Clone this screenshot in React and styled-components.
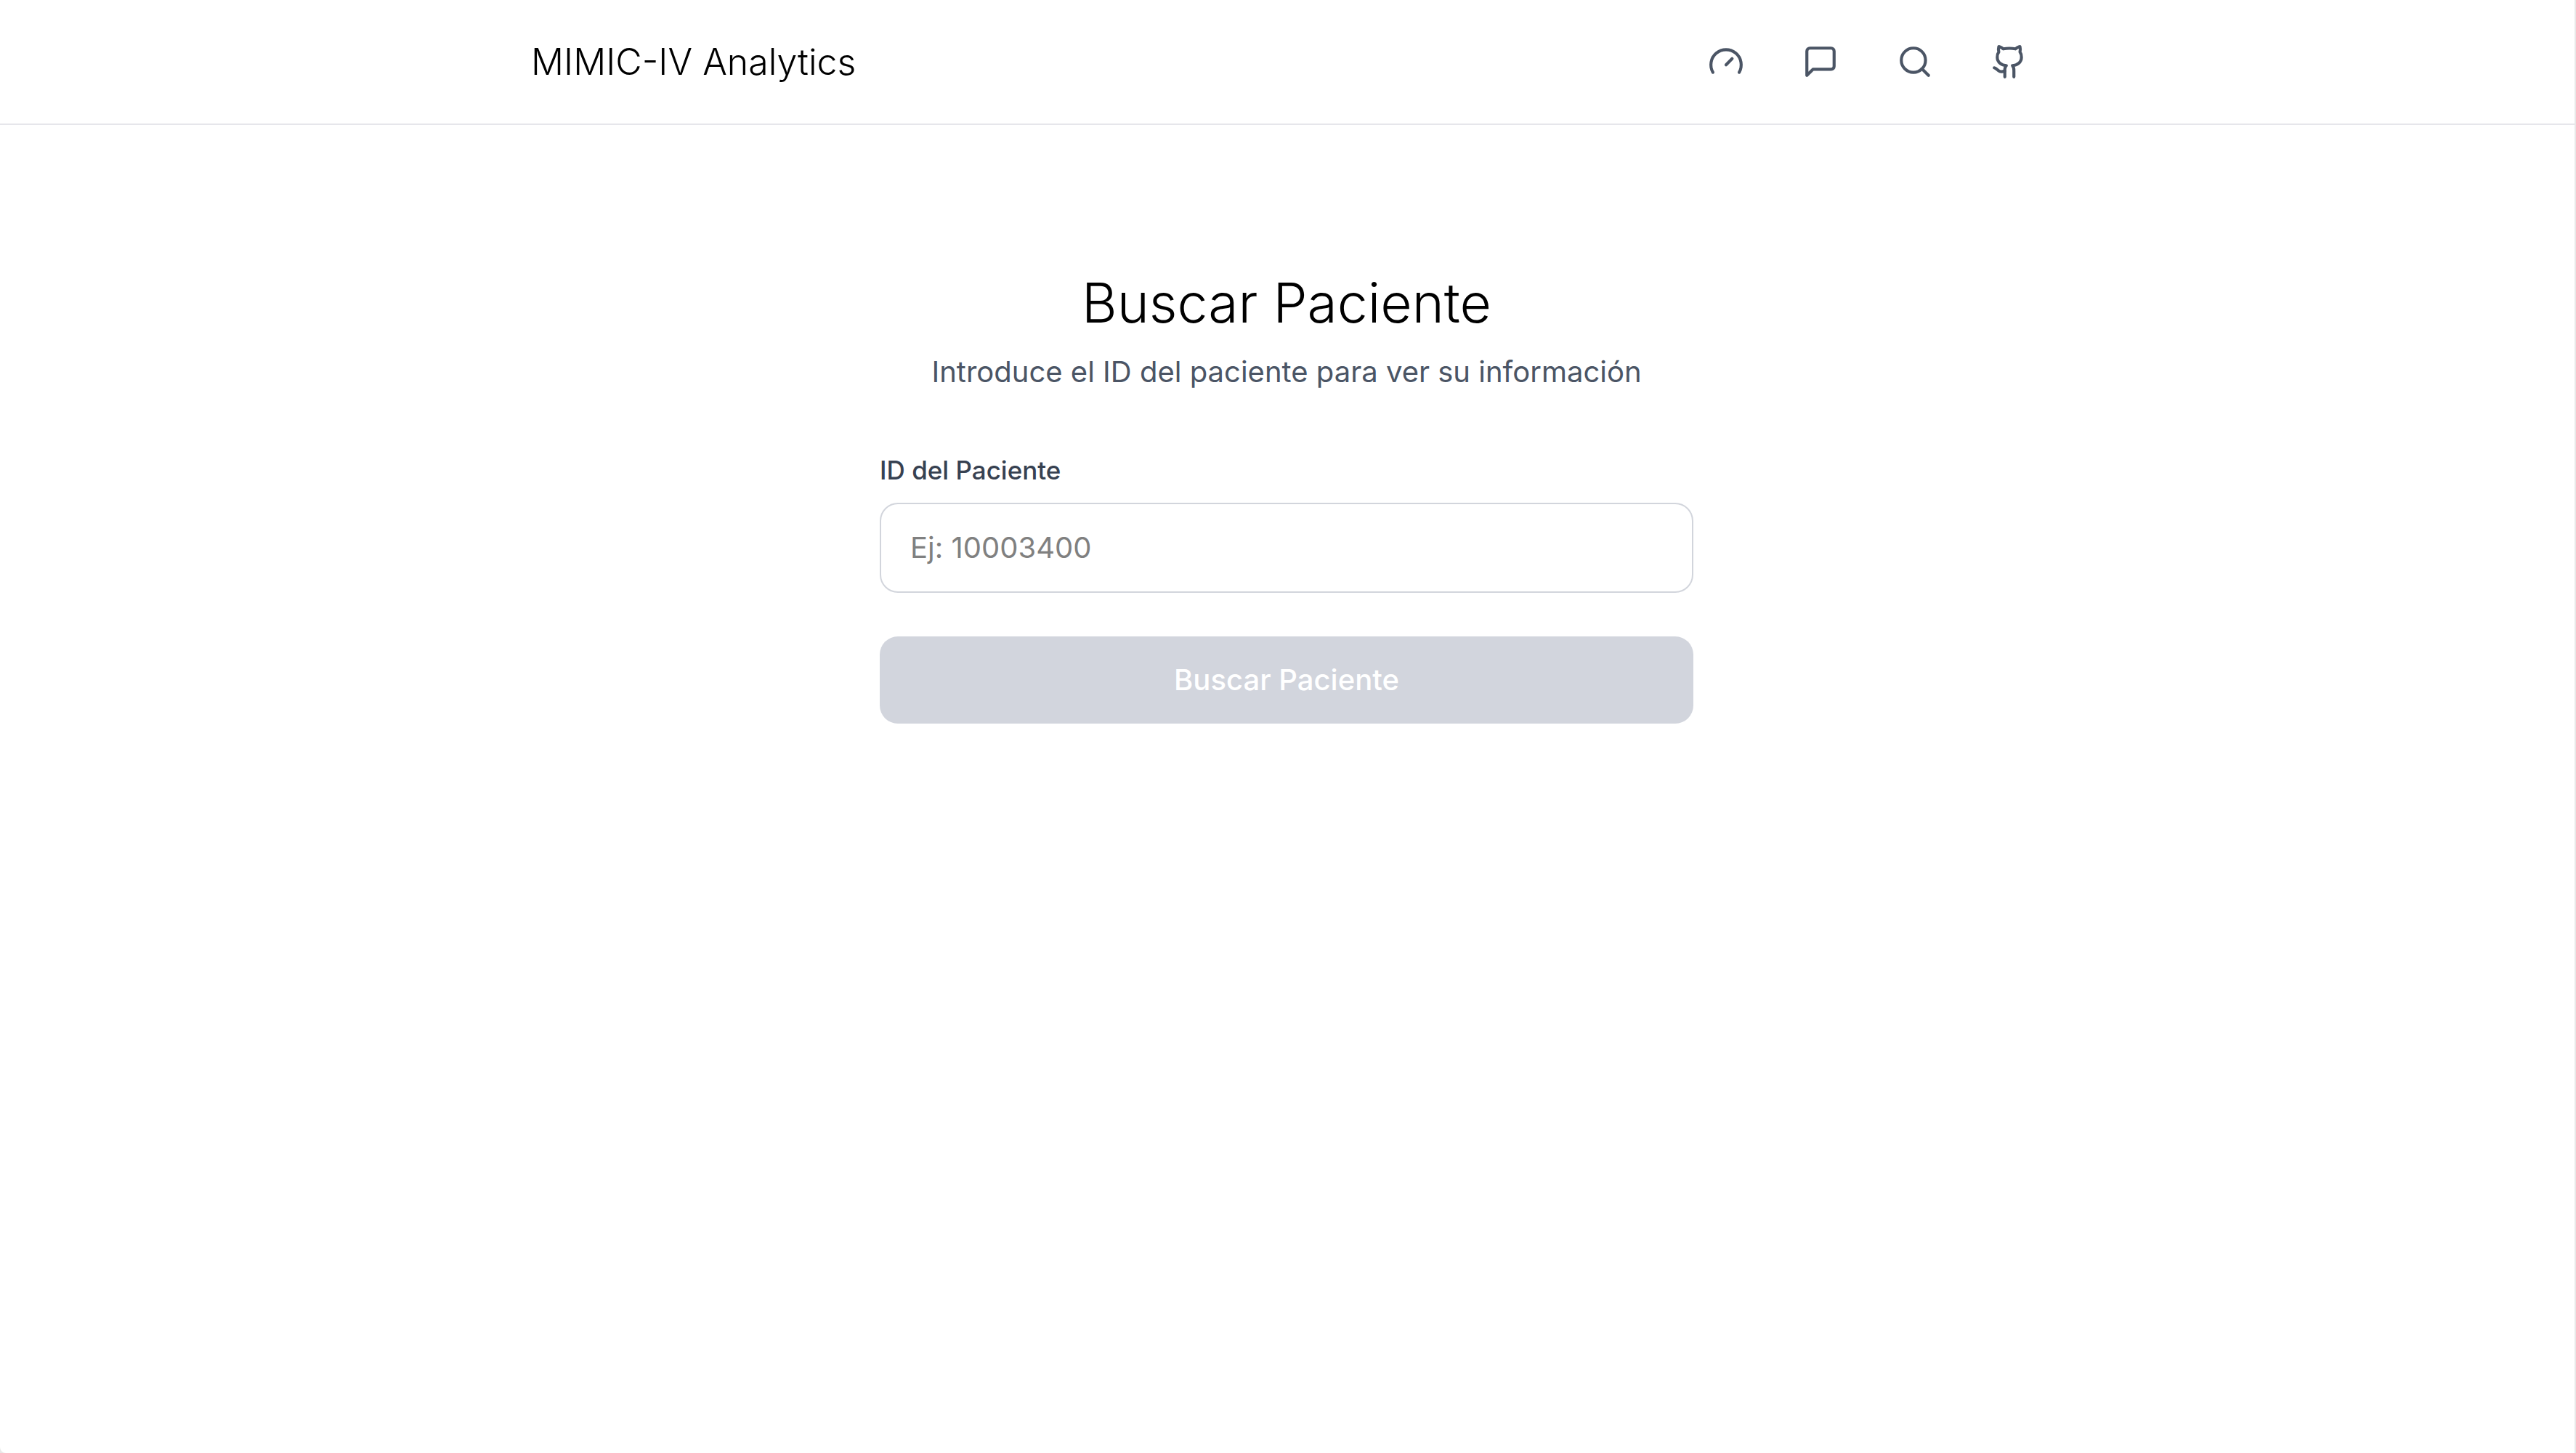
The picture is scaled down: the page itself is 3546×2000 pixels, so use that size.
import React, { useState } from "react";
import styled, { createGlobalStyle } from "styled-components";
import { Gauge, Github, Search } from "lucide-react";

const GlobalStyle = createGlobalStyle`
  *, *::before, *::after { box-sizing: border-box; }
  body {
    margin: 0;
    background: #e8e8e8;
    color: #000000;
    font-family: Inter, "Liberation Sans", sans-serif;
    font-size: 40px;
    line-height: 60px;
    -webkit-font-smoothing: antialiased;
  }
`;

const Page = styled.div`
  min-height: 100vh;
  margin-right: 2px;
  background: #ffffff;
  border-bottom-left-radius: 8px;
`;

const Header = styled.header`
  padding: 40px 42px 40px 40px;
  border-bottom: 2px solid #e6e6eb;
`;

const HeaderInner = styled.div`
  display: flex;
  align-items: center;
  justify-content: space-between;
  max-width: 2080px;
  margin: 0 auto;
`;

const Brand = styled.a`
  color: inherit;
  font-size: 50px;
  font-weight: 300;
  line-height: 70px;
  text-decoration: none;
`;

const Nav = styled.nav`
  display: flex;
  gap: 40px;
`;

const NavLink = styled.a`
  display: flex;
  padding: 20px;
  border-radius: 25px;
  color: #4b5565;

  &:hover { background: #f3f4f6; }
`;

const Main = styled.main`
  padding: 200px 42px 200px 40px;
`;

const Panel = styled.section`
  max-width: 1120px;
  margin: 0 auto;
`;

const Intro = styled.div`
  margin-bottom: 80px;
  text-align: center;
`;

const Title = styled.h1`
  margin: 0 0 20px;
  font-size: 75px;
  font-weight: 300;
  line-height: 90px;
`;

const Subtitle = styled.p`
  margin: 0;
  color: #4b5565;
`;

const Form = styled.form`
  display: flex;
  flex-direction: column;
  gap: 60px;
`;

const Field = styled.div`
  display: flex;
  flex-direction: column;
  gap: 20px;
`;

const Label = styled.label`
  color: #374151;
  font-size: 35px;
  font-weight: 500;
  line-height: 50px;
`;

const TextInput = styled.input`
  width: 100%;
  padding: 30px 40px;
  border: 2px solid #d2d5dc;
  border-radius: 25px;
  outline: none;
  background: transparent;
  color: inherit;
  font: inherit;

  &::placeholder { color: #808080; opacity: 1; }
  &:focus { border-color: #000000; }
`;

const SubmitButton = styled.button`
  padding: 30px 40px;
  border: 0;
  border-radius: 25px;
  background: #000000;
  color: #ffffff;
  font: inherit;
  font-weight: 500;
  cursor: pointer;

  &:disabled {
    background: #d2d5dd;
    cursor: not-allowed;
  }
`;

function MessageIcon({ size }) {
  return (
    <svg
      width={size}
      height={size}
      viewBox="0 0 24 24"
      fill="none"
      stroke="currentColor"
      strokeWidth="2"
      strokeLinecap="round"
      strokeLinejoin="round"
      aria-hidden="true"
    >
      <path d="M21 15a2 2 0 0 1-2 2H7l-4 4V5a2 2 0 0 1 2-2h14a2 2 0 0 1 2 2z" />
    </svg>
  );
}

const links = [
  { label: "Panel", href: "#panel", Icon: Gauge },
  { label: "Chat", href: "#chat", Icon: MessageIcon },
  { label: "Buscar", href: "#buscar", Icon: Search },
  { label: "GitHub", href: "#github", Icon: Github },
];

export default function App() {
  const [patientId, setPatientId] = useState("");

  return (
    <>
      <GlobalStyle />
      <Page>
        <Header>
          <HeaderInner>
            <Brand href="#inicio">MIMIC-IV Analytics</Brand>
            <Nav>
              {links.map(({ label, href, Icon }) => (
                <NavLink key={label} href={href} aria-label={label}>
                  <Icon size={50} />
                </NavLink>
              ))}
            </Nav>
          </HeaderInner>
        </Header>
        <Main>
          <Panel>
            <Intro>
              <Title>Buscar Paciente</Title>
              <Subtitle>Introduce el ID del paciente para ver su información</Subtitle>
            </Intro>
            <Form onSubmit={(event) => event.preventDefault()}>
              <Field>
                <Label htmlFor="patient-id">ID del Paciente</Label>
                <TextInput
                  id="patient-id"
                  type="text"
                  placeholder="Ej: 10003400"
                  value={patientId}
                  onChange={(event) => setPatientId(event.target.value)}
                />
              </Field>
              <SubmitButton type="submit" disabled={!patientId.trim()}>
                Buscar Paciente
              </SubmitButton>
            </Form>
          </Panel>
        </Main>
      </Page>
    </>
  );
}
